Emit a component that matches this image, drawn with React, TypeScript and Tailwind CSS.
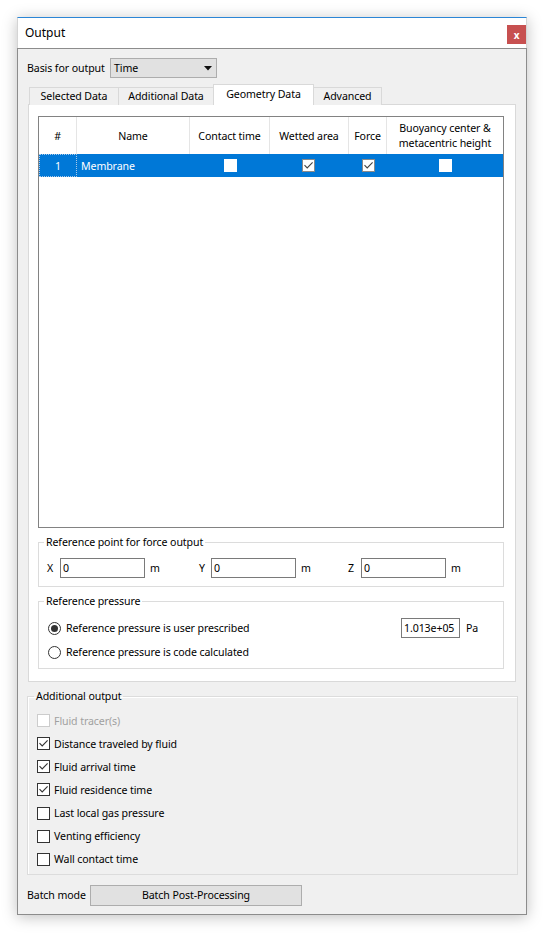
import React from "react";

function Box({ checked, disabled }: { checked?: boolean; disabled?: boolean }) {
  return (
    <span
      className={`flex h-[13px] w-[13px] shrink-0 items-center justify-center border bg-white ${
        disabled ? "border-[#cccccc]" : "border-[#333333]"
      }`}
    >
      {checked && (
        <svg width="11" height="11" viewBox="0 0 11 11">
          <path d="M1.5 5.2 L4.2 8 L9.6 2.4" fill="none" stroke="#333333" strokeWidth="1.1" />
        </svg>
      )}
    </span>
  );
}

function CellBox({ checked }: { checked?: boolean }) {
  return (
    <span
      className={`flex h-[13px] w-[13px] items-center justify-center border bg-white ${
        checked ? "border-[#8a8a8a]" : "border-white"
      }`}
    >
      {checked && (
        <svg width="11" height="11" viewBox="0 0 11 11">
          <path d="M1.5 5.2 L4.2 8 L9.6 2.4" fill="none" stroke="#444444" strokeWidth="1.1" />
        </svg>
      )}
    </span>
  );
}

function Radio({ on }: { on?: boolean }) {
  return (
    <span className="flex h-[13px] w-[13px] shrink-0 items-center justify-center rounded-full border border-[#333333] bg-white">
      {on && <span className="h-[7px] w-[7px] rounded-full bg-[#333333]" />}
    </span>
  );
}

function Field({ w, value }: { w: string; value: string }) {
  return (
    <div className={`flex h-[20px] items-center border border-[#7a7a7a] bg-white pl-[2px] ${w}`}>{value}</div>
  );
}

export default function App() {
  const outputs = [
    { label: "Fluid tracer(s)", checked: false, disabled: true },
    { label: "Distance traveled by fluid", checked: true },
    { label: "Fluid arrival time", checked: true },
    { label: "Fluid residence time", checked: true },
    { label: "Last local gas pressure", checked: false },
    { label: "Venting efficiency", checked: false },
    { label: "Wall contact time", checked: false },
  ];

  return (
    <div className="min-h-[938px] w-[545px] bg-white pl-[17px] pt-[17px] font-['Noto_Sans',sans-serif] text-[10.6px] leading-[16px] tracking-[-0.1px] text-black">
      <div className="w-[510px] shadow-[0_2px_14px_rgba(0,0,0,0.25)]">
        {/* Title bar */}
        <div className="flex h-[31px] items-center justify-between border-x border-t border-x-[#d4d4d4] border-t-[#2b86d6] bg-white">
          <span className="ml-[7px] text-[12px] tracking-normal">Output</span>
          <div className="mt-[7px] flex h-[19px] w-[19px] items-center justify-center self-start bg-[#c75050] text-[10px] font-bold leading-none text-white">
            x
          </div>
        </div>

        {/* Body */}
        <div className="h-[867px] border border-[#8c8c8c] bg-[#f0f0f0] pt-[9px]">
          {/* Basis */}
          <div className="ml-[9px] flex items-center">
            <span className="w-[83px]">Basis for output</span>
            <div className="flex h-[20px] w-[107px] items-center justify-between border border-[#adadad] bg-[#e1e1e1] pl-[3px] pr-[4px]">
              <span>Time</span>
              <svg width="8" height="5" viewBox="0 0 8 5">
                <path d="M0 0 L8 0 L4 4.5 Z" fill="#111111" />
              </svg>
            </div>
          </div>

          {/* Tabs */}
          <div className="ml-[11px] mt-[6px] flex h-[21px] items-end">
            <div className="flex h-[18px] w-[90px] items-center justify-center border-x border-t border-[#d9d9d9] bg-[#f0f0f0] pb-[1px]">
              Selected Data
            </div>
            <div className="-ml-px flex h-[18px] w-[96px] items-center justify-center border-x border-t border-[#d9d9d9] bg-[#f0f0f0] pb-[1px]">
              Additional Data
            </div>
            <div className="relative z-10 -ml-px flex h-[21px] w-[101px] items-center justify-center border-x border-t border-[#d9d9d9] bg-white pb-[2px]">
              Geometry Data
            </div>
            <div className="-ml-px flex h-[18px] w-[69px] items-center justify-center border-x border-t border-[#d9d9d9] bg-[#f0f0f0] pb-[1px]">
              Advanced
            </div>
          </div>

          {/* Panel */}
          <div className="-mt-px ml-[10px] h-[578px] w-[488px] border border-[#d9d9d9] bg-white pt-[11px]">
            {/* Table */}
            <div className="ml-[9px] h-[412px] w-[466px] border border-[#828282] bg-white">
              <div className="grid h-[37px] grid-cols-[38px_113px_80px_79px_38px_116px]">
                <div className="flex items-center justify-center border-r border-[#e5e5e5]">#</div>
                <div className="flex items-center justify-center border-r border-[#e5e5e5]">Name</div>
                <div className="flex items-center justify-center border-r border-[#e5e5e5]">Contact time</div>
                <div className="flex items-center justify-center border-r border-[#e5e5e5]">Wetted area</div>
                <div className="flex items-center justify-center border-r border-[#e5e5e5]">Force</div>
                <div className="flex flex-col items-center justify-center leading-[15px]">
                  <span>Buoyancy center &amp;</span>
                  <span>metacentric height</span>
                </div>
              </div>
              <div className="grid h-[23px] grid-cols-[38px_113px_80px_79px_38px_116px] bg-[#0078d7] text-white">
                <div className="flex items-center justify-center border border-dotted border-[#a9c9e8]">1</div>
                <div className="flex items-center pl-[4px]">Membrane</div>
                <div className="flex items-center justify-center">
                  <CellBox />
                </div>
                <div className="flex items-center justify-center pr-[3px]">
                  <CellBox checked />
                </div>
                <div className="flex items-center justify-center">
                  <CellBox checked />
                </div>
                <div className="flex items-center justify-center">
                  <CellBox />
                </div>
              </div>
            </div>

            {/* Reference point */}
            <fieldset className="ml-[9px] mt-[6px] w-[466px] border border-[#dcdcdc] pb-[8px] pt-[8px]">
              <legend className="ml-[5px] px-[2px] leading-[16px]">Reference point for force output</legend>
              <div className="flex items-center pl-[8px]">
                <span className="w-[13px]">X</span>
                <Field w="w-[85px]" value="0" />
                <span className="ml-[5px] w-[49px]">m</span>
                <span className="w-[12px]">Y</span>
                <Field w="w-[85px]" value="0" />
                <span className="ml-[5px] w-[47px]">m</span>
                <span className="w-[13px]">Z</span>
                <Field w="w-[85px]" value="0" />
                <span className="ml-[5px]">m</span>
              </div>
            </fieldset>

            {/* Reference pressure */}
            <fieldset className="ml-[9px] mt-[6px] w-[466px] border border-[#dcdcdc] pb-[6px] pt-[9px]">
              <legend className="ml-[5px] px-[2px] leading-[16px]">Reference pressure</legend>
              <div className="flex h-[20px] items-center pl-[9px]">
                <Radio on />
                <span className="ml-[5px]">Reference pressure is user prescribed</span>
                <div className="flex-1" />
                <Field w="w-[59px]" value="1.013e+05" />
                <span className="ml-[6px] w-[37px]">Pa</span>
              </div>
              <div className="mt-[4px] flex h-[20px] items-center pl-[9px]">
                <Radio />
                <span className="ml-[5px]">Reference pressure is code calculated</span>
              </div>
            </fieldset>
          </div>

          {/* Additional output */}
          <fieldset className="ml-[9px] mt-[6px] w-[491px] border border-[#dcdcdc] pb-[3px] pt-[5px] shadow-[inset_1px_1px_0_#ffffff]">
            <legend className="ml-[6px] px-[2px] leading-[16px]">Additional output</legend>
            {outputs.map((o) => (
              <div key={o.label} className="flex h-[23.15px] items-center pl-[9px]">
                <Box checked={o.checked} disabled={o.disabled} />
                <span className={`ml-[4px] ${o.disabled ? "text-[#a0a0a0]" : ""}`}>{o.label}</span>
              </div>
            ))}
          </fieldset>

          {/* Batch */}
          <div className="ml-[9px] mt-[10px] flex items-center">
            <span className="w-[63px]">Batch mode</span>
            <div className="flex h-[21px] w-[212px] items-center justify-center border border-[#adadad] bg-[#e1e1e1]">
              Batch Post-Processing
            </div>
          </div>
        </div>
      </div>
    </div>
  );
}
